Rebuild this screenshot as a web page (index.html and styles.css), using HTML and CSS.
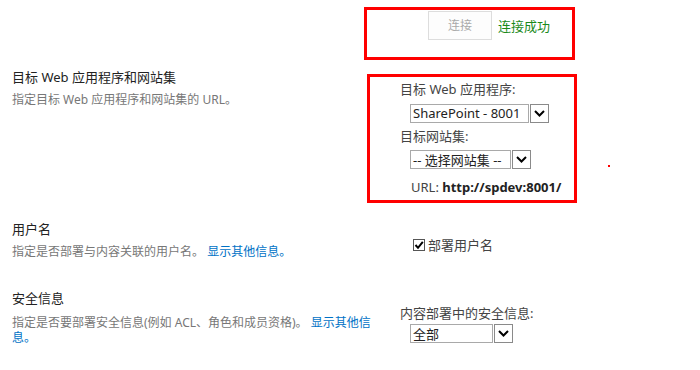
FILE: index.html
```html
<!DOCTYPE html>
<html lang="zh">
<head>
    <meta charset="UTF-8">
    <title>内容部署路径</title>
    <link rel="stylesheet" href="styles.css">
</head>
<body>
    <div class="form">
        <div class="row row-connect">
            <div class="left"></div>
            <div class="right connect">
                <span class="btn">连接</span>
                <span class="ok">连接成功</span>
            </div>
        </div>

        <div class="row row-target">
            <div class="left">
                <h3>目标 Web 应用程序和网站集</h3>
                <p class="desc">指定目标 Web 应用程序和网站集的 URL。</p>
            </div>
            <div class="right">
                <div class="label">目标 Web 应用程序:</div>
                <div class="field">
                    <span class="select sel-app"><span class="val">SharePoint - 8001</span><span class="arrow"><svg width="11" height="7" viewBox="0 0 11 7"><path d="M1 1 L5.5 5.5 L10 1" fill="none" stroke="#000" stroke-width="2"/></svg></span></span>
                </div>
                <div class="label">目标网站集:</div>
                <div class="field">
                    <span class="select sel-site"><span class="val">-- 选择网站集 --</span><span class="arrow"><svg width="11" height="7" viewBox="0 0 11 7"><path d="M1 1 L5.5 5.5 L10 1" fill="none" stroke="#000" stroke-width="2"/></svg></span></span>
                </div>
                <div class="url">URL: <b>http://spdev:8001/</b></div>
            </div>
        </div>

        <div class="row row-user">
            <div class="left">
                <h3>用户名</h3>
                <p class="desc">指定是否部署与内容关联的用户名。 <a href="#">显示其他信息。</a></p>
            </div>
            <div class="right">
                <label class="check"><span class="box"><svg width="10" height="10" viewBox="0 0 10 10"><path d="M1.5 5 L4 7.8 L8.8 1.8" fill="none" stroke="#000" stroke-width="2"/></svg></span>部署用户名</label>
            </div>
        </div>

        <div class="row row-security">
            <div class="left">
                <h3>安全信息</h3>
                <p class="desc desc-sec">指定是否要部署安全信息(例如 ACL、角色和成员资格)。 <a href="#">显示其他信息。</a></p>
            </div>
            <div class="right">
                <div class="label">内容部署中的安全信息:</div>
                <div class="field field-tight">
                    <span class="select sel-sec"><span class="val">全部</span><span class="arrow"><svg width="11" height="7" viewBox="0 0 11 7"><path d="M1 1 L5.5 5.5 L10 1" fill="none" stroke="#000" stroke-width="2"/></svg></span></span>
                </div>
            </div>
        </div>
    </div>

    <div class="mark mark-connect"></div>
    <div class="mark mark-target"></div>
    <div class="dot"></div>
</body>
</html>
```
FILE: styles.css
```css
body {
    margin: 0;
    background: #fff;
    font-family: "Segoe UI", "Noto Sans", "Noto Sans CJK SC", sans-serif;
    color: #444;
}
.form {
    padding-left: 12px;
}
.row {
    display: grid;
    grid-template-columns: 388px 1fr;
}
.left h3 {
    margin: 0;
    font-size: 13px;
    font-weight: normal;
    color: #222;
    line-height: 18px;
}
.desc {
    margin: 7px 0 0;
    width: 362px;
    font-size: 12px;
    line-height: 14px;
    color: #777;
}
.desc-sec {
    margin-top: 8px;
    line-height: 15px;
}
.desc a {
    color: #0072c6;
    text-decoration: none;
}
.row-connect {
    height: 63px;
}
.connect {
    display: flex;
    align-items: center;
    padding-left: 28px;
    height: 50px;
}
.btn {
    width: 62px;
    height: 27px;
    border: 1px solid #ddd;
    background: #fdfdfd;
    color: #aaa;
    font-size: 12px;
    display: flex;
    align-items: center;
    justify-content: center;
}
.ok {
    margin-left: 6px;
    color: #1a8a1a;
    font-size: 13px;
}
.row-target {
    height: 157px;
}
.row-target .left {
    padding-top: 5px;
}
.label {
    font-size: 13px;
    color: #444;
    line-height: 18px;
}
.row-target .right {
    padding-top: 17px;
}
.field {
    padding-left: 10px;
    margin: 3px 0 4px;
}
.field-tight {
    margin-top: 0;
}
.select {
    display: inline-flex;
    height: 19px;
    font-size: 13px;
    color: #222;
}
.select .val {
    border: 1px solid #a9a9a9;
    display: flex;
    align-items: center;
    padding-left: 2px;
    box-sizing: border-box;
    height: 19px;
    white-space: nowrap;
    overflow: hidden;
}
.select .arrow {
    width: 19px;
    height: 19px;
    box-sizing: border-box;
    border: 1px solid #8a8a8a;
    margin-left: 1px;
    display: flex;
    align-items: center;
    justify-content: center;
    background: #fff;
}
.sel-app .val { width: 119px; }
.sel-site .val { width: 101px; }
.sel-sec .val { width: 83px; }
.url {
    margin-top: 8px;
    padding-left: 11px;
    font-size: 13px;
    color: #444;
}
.url b {
    color: #222;
}
.row-user {
    height: 69px;
}
.row-user .right {
    padding-top: 15px;
}
.check {
    display: flex;
    align-items: center;
    padding-left: 13px;
    font-size: 13px;
    color: #444;
}
.check .box {
    width: 12px;
    height: 12px;
    box-sizing: border-box;
    border: 1px solid #555;
    margin-right: 3px;
    display: flex;
    align-items: center;
    justify-content: center;
}
.row-security .right {
    padding-top: 15px;
}
.mark {
    position: absolute;
    border: 3px solid #f00;
    box-sizing: border-box;
}
.mark-connect {
    left: 364px;
    top: 7px;
    width: 211px;
    height: 53px;
}
.mark-target {
    left: 367px;
    top: 74px;
    width: 210px;
    height: 129px;
}
.dot {
    position: absolute;
    left: 608px;
    top: 165px;
    width: 2px;
    height: 2px;
    background: #f00;
}
```
